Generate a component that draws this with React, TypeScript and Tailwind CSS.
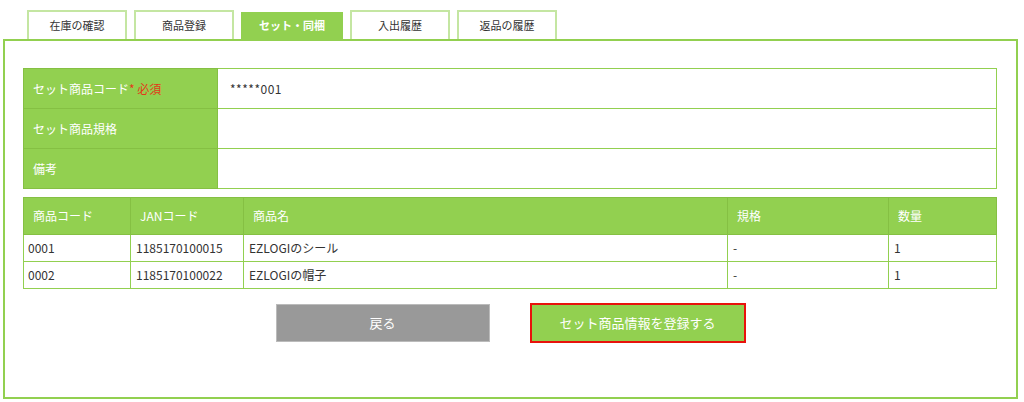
import React from 'react';

const TABS = ['在庫の確認', '商品登録', 'セット・同梱', '入出履歴', '返品の履歴'];

const ITEMS = [
  { code: '0001', jan: '1185170100015', name: 'EZLOGIのシール', spec: '-', qty: '1' },
  { code: '0002', jan: '1185170100022', name: 'EZLOGIの帽子', spec: '-', qty: '1' },
];

export default function App() {
  const active = 2;

  return (
    <div className="w-[1024px] h-[402px] bg-white text-[#333] text-[12px] font-['Meiryo','Noto_Sans_CJK_JP',sans-serif] overflow-hidden">
      {/* タブ */}
      <div className="flex items-end gap-[7px] pl-[27px] h-[39px]">
        {TABS.map((t, i) =>
          i === active ? (
            <div key={t} className="w-[102px] h-[27px] bg-[#92d050] text-white font-bold text-[11px] flex items-center justify-center">
              {t}
            </div>
          ) : (
            <div key={t} className="w-[100px] h-[29px] border-2 border-b-0 border-[#c4e6a2] bg-white text-[11px] flex items-center justify-center">
              {t}
            </div>
          )
        )}
      </div>

      {/* パネル */}
      <div className="ml-[3px] w-[1015px] h-[360px] border-2 border-[#92d050] bg-white px-[18px] pt-[27px]">
        <table className="w-[974px] border-collapse">
          <tbody>
            <tr className="h-[40px]">
              <th className="w-[194px] bg-[#92d050] text-white font-normal text-left pl-[9px] border border-[#85c043]">
                セット商品コード<span className="text-[#e23a1a]">* 必須</span>
              </th>
              <td className="border border-[#92d050] pl-[12px] tracking-[0.5px]">*****001</td>
            </tr>
            <tr className="h-[40px]">
              <th className="bg-[#92d050] text-white font-normal text-left pl-[9px] border border-[#85c043]">セット商品規格</th>
              <td className="border border-[#92d050]"></td>
            </tr>
            <tr className="h-[40px]">
              <th className="bg-[#92d050] text-white font-normal text-left pl-[9px] border border-[#85c043]">備考</th>
              <td className="border border-[#92d050]"></td>
            </tr>
          </tbody>
        </table>

        <table className="w-[974px] border-collapse mt-[8px]">
          <thead>
            <tr className="h-[37px] bg-[#92d050] text-white">
              <th className="w-[107px] font-normal text-left pl-[9px] border border-[#85c043]">商品コード</th>
              <th className="w-[113px] font-normal text-left pl-[9px] border border-[#85c043]">JANコード</th>
              <th className="w-[484px] font-normal text-left pl-[9px] border border-[#85c043]">商品名</th>
              <th className="w-[161px] font-normal text-left pl-[9px] border border-[#85c043]">規格</th>
              <th className="font-normal text-left pl-[9px] border border-[#85c043]">数量</th>
            </tr>
          </thead>
          <tbody>
            {ITEMS.map((r) => (
              <tr key={r.code} className="h-[27px]">
                <td className="pl-[4px] border border-[#92d050]">{r.code}</td>
                <td className="pl-[5px] border border-[#92d050]">{r.jan}</td>
                <td className="pl-[5px] border border-[#92d050]">{r.name}</td>
                <td className="pl-[5px] border border-[#92d050]">{r.spec}</td>
                <td className="pl-[5px] border border-[#92d050]">{r.qty}</td>
              </tr>
            ))}
          </tbody>
        </table>

        {/* ボタン */}
        <div className="flex justify-center items-center gap-[40px] mt-[14px]">
          <button className="w-[214px] h-[38px] bg-[#999999] border border-[#bbbbbb] text-white text-[13px]">戻る</button>
          <button className="w-[216px] h-[40px] bg-[#92d050] border-2 border-[#e8120c] text-white text-[13px]">セット商品情報を登録する</button>
        </div>
      </div>
    </div>
  );
}
